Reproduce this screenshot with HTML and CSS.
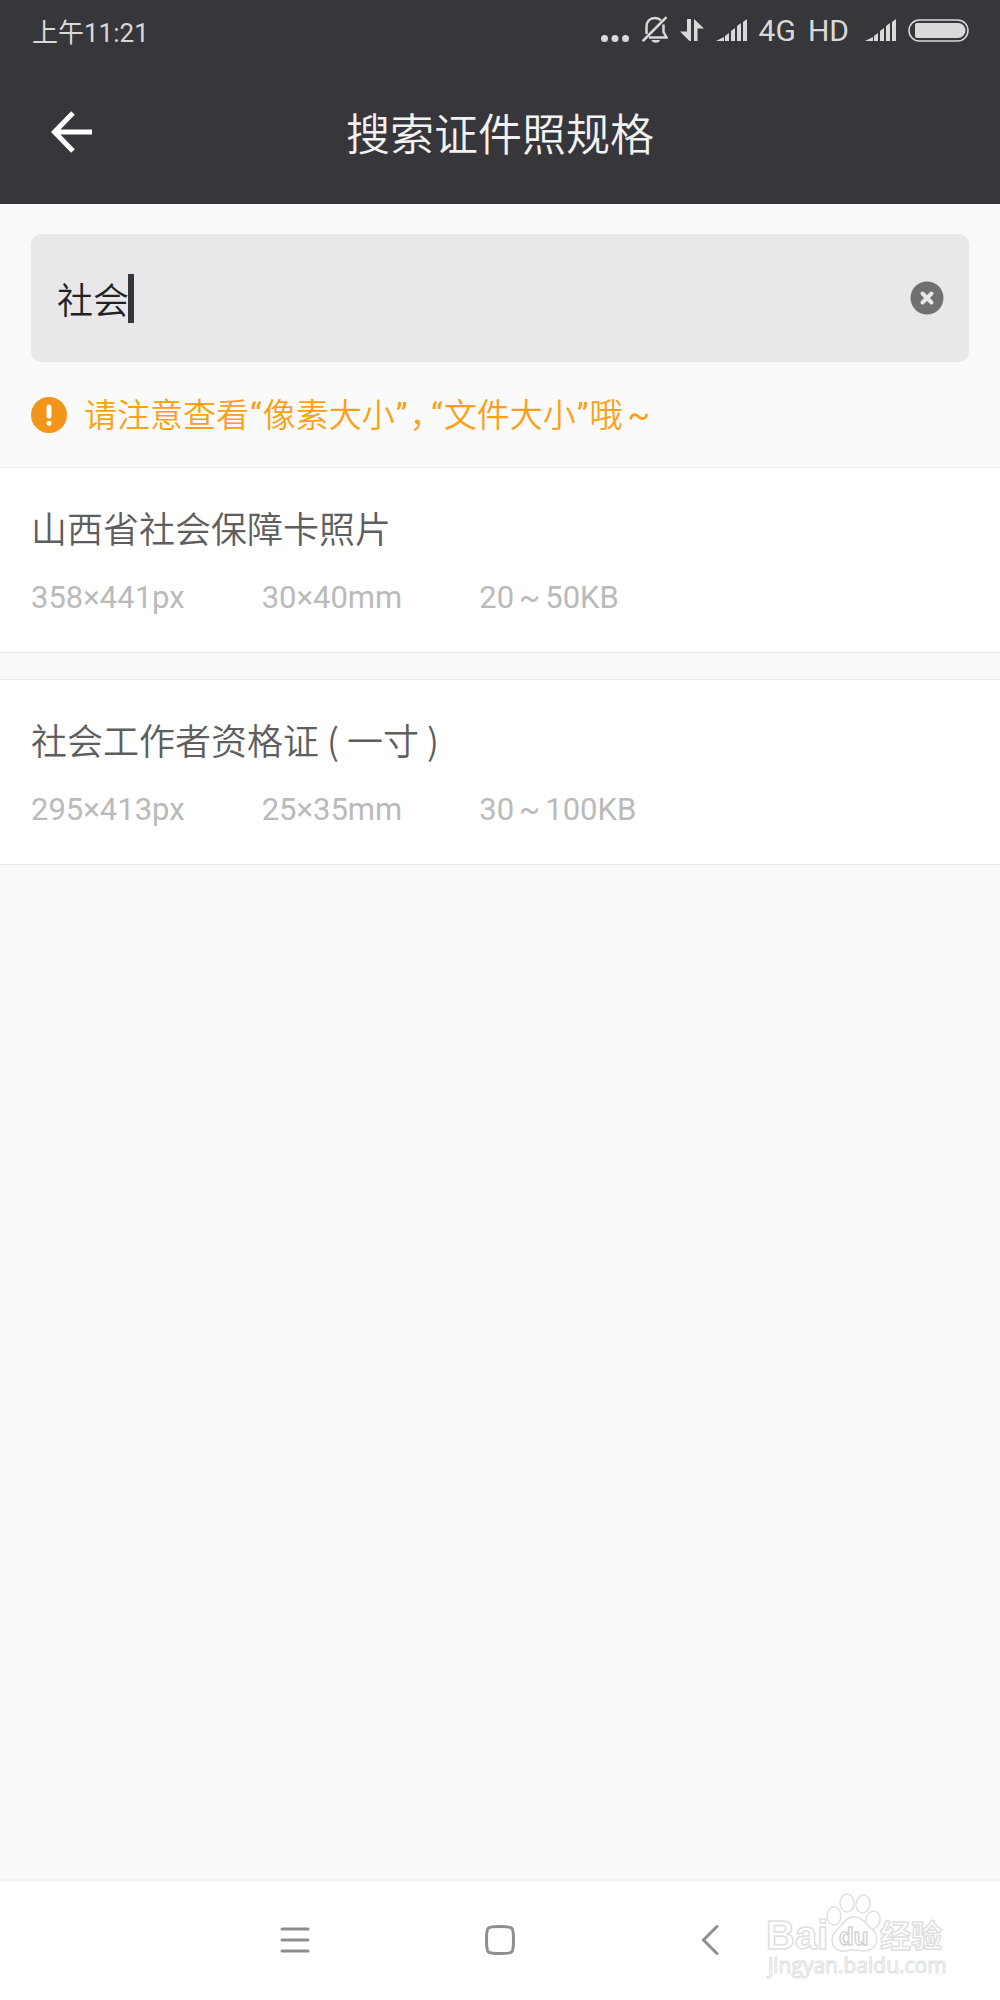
FILE: index.html
```html
<!DOCTYPE html>
<html lang="zh-CN">
	<head>
		<title>搜索证件照规格</title>
		<meta charset="utf-8">
		<meta name="viewport" content="width=device-width, initial-scale=1">
		<link rel="stylesheet" href="styles.css">
	</head>
	<body>
		<div class="status">
			<span class="time">上午11:21</span>
			<div class="indicators">
				<svg width="29" height="28" viewBox="0 0 29 28"><circle cx="3.5" cy="22.5" r="3.5"/><circle cx="14" cy="22.5" r="3.5"/><circle cx="24.5" cy="22.5" r="3.5"/></svg>
				<svg width="26" height="28" viewBox="0 0 26 28">
					<path class="line" d="M4.5 18V11C4.5 5.5 8 2 13 2c2.5 0 4.5.8 6 2.3M21.5 8.5V16l3 5.5H7"/>
					<path class="line" d="M.8 25 24.5 1.2"/>
					<path d="M9.5 24h8.5a4.3 3.3 0 0 1-8.5 0z"/>
				</svg>
				<svg width="24" height="28" viewBox="0 0 24 28"><path d="M7 3h4v22H9.5L0 15.5h7zM14 3l10 9.5h-6.5V25H14z"/></svg>
				<svg width="31" height="28" viewBox="0 0 31 28"><path d="M0 25l8-4v4zM9 20l4-3v8H9zM15 15l4-3v13h-4zM21 10l4-3v18h-4zM27 6l4-3v22h-4z"/></svg>
				<span>4G</span>
				<span>HD</span>
				<svg class="sim2" width="31" height="28" viewBox="0 0 31 28"><path d="M0 25l8-4v4zM9 20l4-3v8H9zM15 15l4-3v13h-4zM21 10l4-3v18h-4zM27 6l4-3v22h-4z"/></svg>
				<svg width="61" height="28" viewBox="0 0 61 28">
					<rect class="line thin" x="1" y="4" width="59" height="21" rx="10.5"/>
					<path d="M9 7h41a7.5 7.5 0 0 1 0 15H9a2 2 0 0 1-2-2V9a2 2 0 0 1 2-2z"/>
				</svg>
			</div>
		</div>
		<header class="bar">
			<button class="back" type="button" aria-label="返回">
				<svg width="42" height="42" viewBox="0 0 42 42"><path d="M22 2 3.5 21 22 40M4 21h37"/></svg>
			</button>
			<h1>搜索证件照规格</h1>
		</header>
		<main>
			<form class="search">
				<input type="text" value="社会" aria-label="搜索证件照规格">
				<span class="caret"></span>
				<button class="clear" type="button" aria-label="清除">
					<svg width="34" height="34" viewBox="0 0 34 34"><circle cx="17" cy="17" r="16.5"/><path d="M12.5 12.5l9 9M21.5 12.5l-9 9"/></svg>
				</button>
			</form>
			<p class="notice">
				<svg width="36" height="36" viewBox="0 0 36 36"><circle cx="18" cy="18" r="18"/><path d="M18 10v9"/><path d="M18 26.2v.1"/></svg>
				<span>请注意查看<span class="quote">“</span>像素大小<span class="quote">”</span><span class="comma">，</span><span class="quote">“</span>文件大小<span class="quote">”</span>哦<span class="tilde">~</span></span>
			</p>
			<ul class="results">
				<li>
					<h2>山西省社会保障卡照片</h2>
					<div class="specs">
						<span>358×441px</span>
						<span>30×40mm</span>
						<span>20<span class="tilde">~</span>50KB</span>
					</div>
				</li>
				<li>
					<h2>社会工作者资格证<span class="paren">(</span>一寸<span class="paren">)</span></h2>
					<div class="specs">
						<span>295×413px</span>
						<span>25×35mm</span>
						<span>30<span class="tilde">~</span>100KB</span>
					</div>
				</li>
			</ul>
		</main>
		<nav class="keys">
			<button type="button" aria-label="菜单">
				<svg width="30" height="30" viewBox="0 0 30 30"><path d="M2 4h26M2 15h26M2 26h26"/></svg>
			</button>
			<button type="button" aria-label="主屏幕">
				<svg width="30" height="30" viewBox="0 0 30 30"><path d="M15 1.5c9 0 10.5.5 11.8 1.7C28 4.5 28.5 7 28.5 15s-.5 10.5-1.7 11.8C25.5 28 23 28.5 15 28.5s-10.5-.5-11.8-1.7C2 25.5 1.5 23 1.5 15s.5-10.5 1.7-11.8C4.5 2 7 1.5 15 1.5z"/></svg>
			</button>
			<button type="button" aria-label="返回">
				<svg width="30" height="30" viewBox="0 0 30 30"><path d="M27 1.5 13.5 15 27 28.5"/></svg>
			</button>
			<svg class="mark" width="184" height="92" viewBox="0 0 184 92">
				<ellipse cx="69" cy="25" rx="7" ry="9"/>
				<ellipse cx="82" cy="12" rx="7" ry="9"/>
				<ellipse cx="98" cy="13" rx="7" ry="9" transform="rotate(10 98 13)"/>
				<ellipse cx="108" cy="29" rx="7" ry="9" transform="rotate(12 108 29)"/>
				<text class="latin" x="1" y="58">Bai</text>
				<path d="M89 26c-9 0-11 8-17 13-7 6-7 19 4 21 6 1 9-2 14-1 5 0 9 2 14 0 9-3 10-14 3-21-6-5-9-12-18-12z"/>
				<text class="du" x="74" y="54">du</text>
				<text class="hanzi" x="115" y="56">经验</text>
				<text class="site" x="3" y="82">jingyan.baidu.com</text>
			</svg>
		</nav>
	</body>
</html>
```
FILE: styles.css
```css
html, body {
	margin: 0;
	padding: 0;
}
body {
	display: flex;
	flex-direction: column;
	min-height: 100vh;
	background-color: #fafafa;
	color: #5e5e5e;
	font-family: 'Noto Sans CJK SC', sans-serif;
	font-weight: 350;
}
button {
	border: 0;
	padding: 0;
	background: none;
	cursor: pointer;
}
svg {
	display: block;
}
h1, h2, p, ul {
	margin: 0;
	padding: 0;
	font-weight: inherit;
}

/* dark top: status line and title bar */
.status {
	display: flex;
	justify-content: space-between;
	align-items: center;
	height: 60px;
	padding: 0 31px 0 32px;
	background-color: #37363b;
	color: #d9d9d9;
	font-family: Roboto, 'Noto Sans CJK SC', sans-serif;
	font-size: 30px;
	font-weight: 400;
}
.time {
	font-size: 26px;
}
.indicators {
	display: flex;
	align-items: center;
	gap: 12px;
}
.indicators svg {
	fill: #d9d9d9;
}
.indicators .line {
	fill: none;
	stroke: #d9d9d9;
	stroke-width: 2.5;
}
.indicators .thin {
	stroke-width: 1.5;
}
.sim2 {
	margin-left: 4px;
}
.bar {
	display: grid;
	grid-template-columns: 100px 1fr 100px;
	align-items: center;
	height: 144px;
	background-color: #37363b;
	color: #f2f2f2;
}
.bar h1 {
	font-size: 44px;
	line-height: 60px;
	text-align: center;
}
.back {
	justify-self: end;
	margin-right: 7px;
}
.back svg {
	fill: none;
	stroke: #fff;
	stroke-width: 5;
}

/* search field */
.search {
	position: relative;
	display: flex;
	align-items: center;
	height: 128px;
	margin: 30px 31px 0;
	padding: 0 25px 0 26px;
	border-radius: 10px;
	background-color: #e8e8ea;
}
.search input {
	flex: 1;
	min-width: 0;
	height: 52px;
	border: 0;
	padding: 0;
	background: none;
	outline: none;
	color: #222;
	font: inherit;
	font-size: 36px;
}
.caret {
	position: absolute;
	left: 97px;
	width: 6px;
	height: 49px;
	background-color: #37363b;
}
.clear circle {
	fill: #707072;
}
.clear path {
	stroke: #e8e8ea;
	stroke-width: 4;
	stroke-linecap: round;
}

.notice {
	display: flex;
	align-items: center;
	gap: 17px;
	height: 105px;
	padding: 0 31px;
	color: #ff9f14;
	font-size: 33px;
	line-height: 48px;
}
.notice circle {
	fill: #f4951b;
}
.notice path {
	stroke: #fff;
	stroke-width: 5;
	stroke-linecap: round;
}
.quote {
	margin: 0 1px;
	font-family: Roboto, sans-serif;
	font-weight: 400;
}
.comma {
	margin: 0 4px 0 1px;
	font-feature-settings: 'halt';
}
.tilde {
	margin: 0 5px;
	font-family: Roboto, sans-serif;
	font-weight: 400;
}

/* found formats */
.results {
	display: flex;
	flex-direction: column;
	gap: 26px;
	list-style: none;
}
.results li {
	padding: 35px 31px 34px;
	border-top: 1px solid #ececec;
	border-bottom: 1px solid #e6e8ec;
	background-color: #fff;
}
.results h2 {
	font-size: 36px;
	line-height: 48px;
}
.paren {
	padding: 0 8px;
}
.specs {
	display: flex;
	gap: 77px;
	margin-top: 27px;
	color: #bababa;
	font-family: Roboto, sans-serif;
	font-size: 31px;
	font-weight: 400;
	line-height: 40px;
}

/* system keys */
.keys {
	position: relative;
	display: flex;
	justify-content: center;
	height: 119px;
	margin-top: auto;
	border-top: 2px solid #f0f0f0;
	background-color: #fff;
}
.keys button {
	width: 205px;
	padding-bottom: 2px;
}
.keys button svg {
	margin: 0 auto;
	fill: none;
	stroke: #8e8e8e;
	stroke-width: 3;
	stroke-linecap: round;
}
.mark {
	position: absolute;
	right: 51px;
	bottom: 17px;
	fill: #fff;
	stroke: #e0e0e0;
	stroke-width: 1.5;
	font-family: 'Liberation Sans', sans-serif;
	font-weight: 700;
}
.latin {
	font-size: 40px;
}
.du {
	stroke: #d4d4d4;
	font-size: 24px;
}
.hanzi {
	font-family: 'Noto Sans CJK SC', sans-serif;
	font-size: 31px;
}
.site {
	stroke-width: 1;
	font-family: 'Open Sans', sans-serif;
	font-size: 21px;
	font-weight: 400;
}
```
